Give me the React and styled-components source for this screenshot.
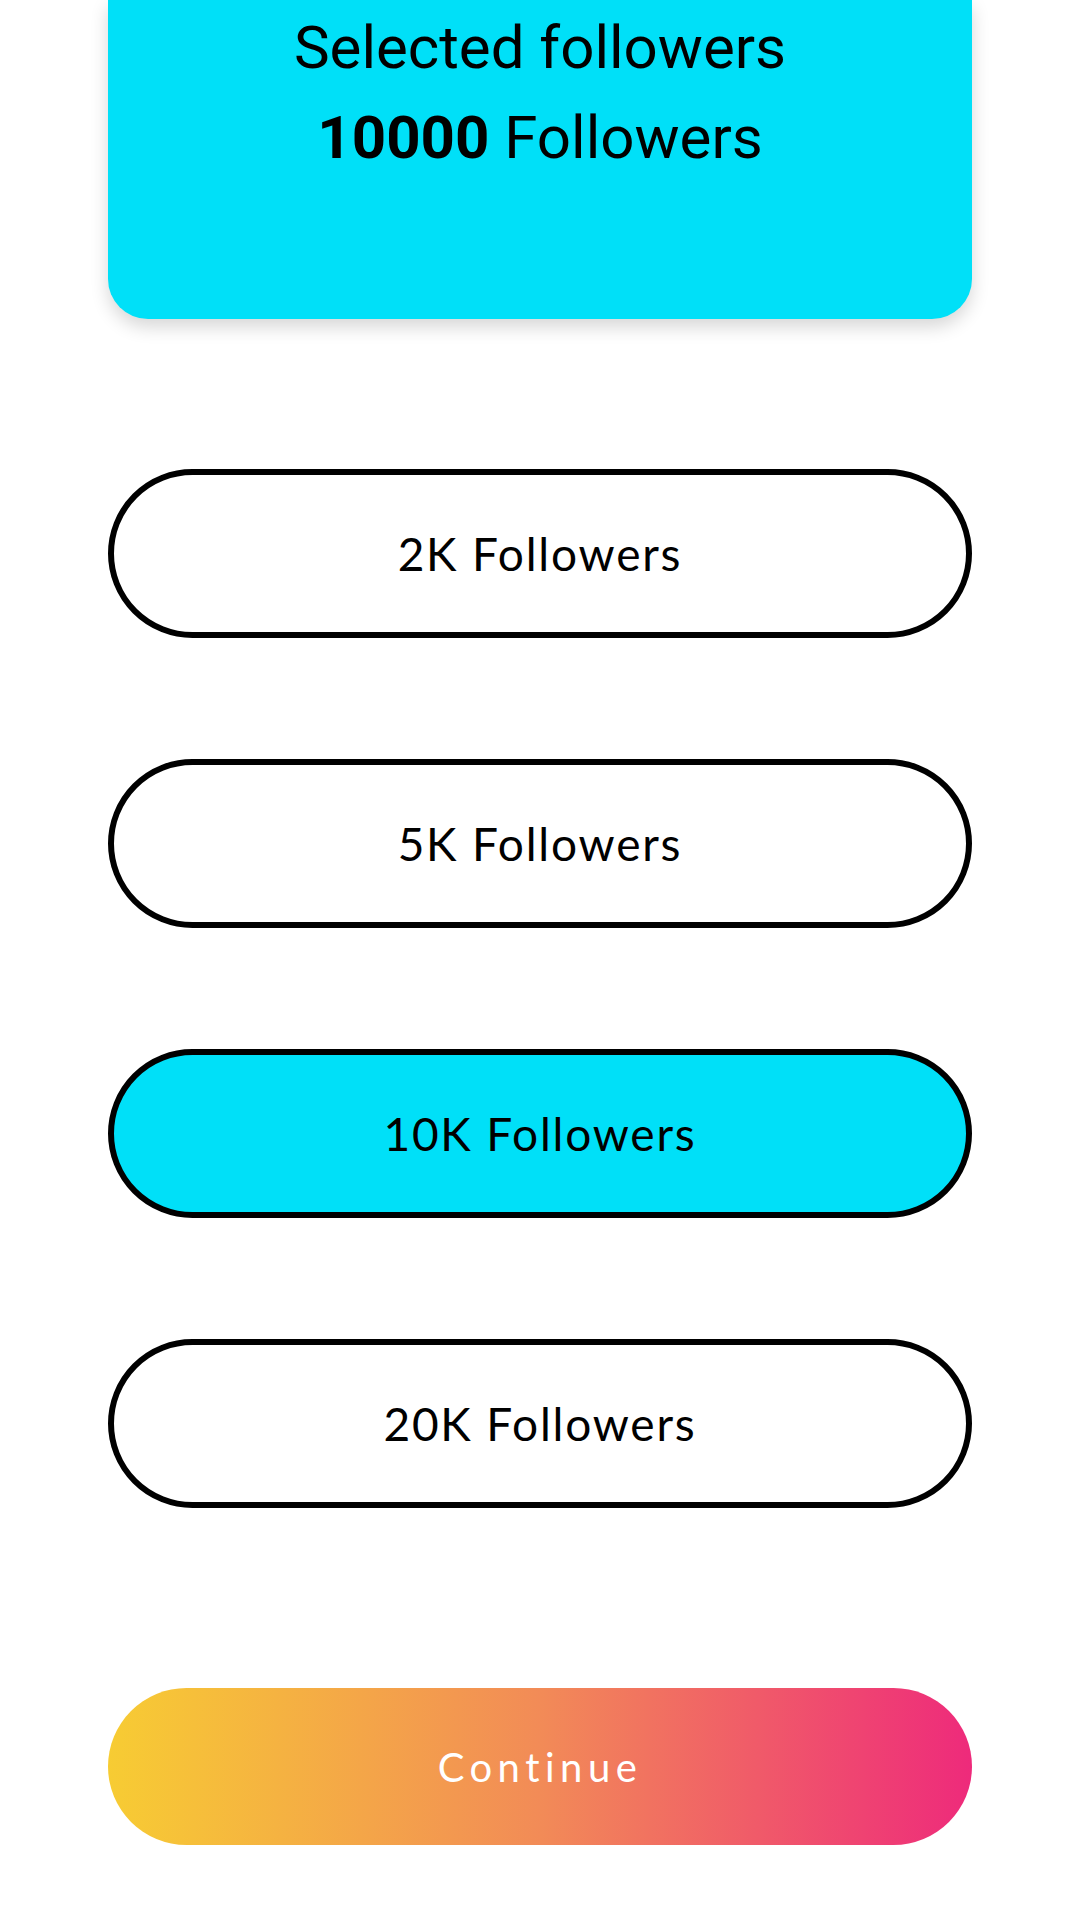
import React, { useState } from 'react';
import styled, { createGlobalStyle } from 'styled-components';

const GlobalStyle = createGlobalStyle`
  html, body {
    margin: 0;
    padding: 0;
    background: #ffffff;
  }
  * {
    box-sizing: border-box;
  }
`;

const Page = styled.div`
  width: 1080px;
  min-height: 1920px;
  padding: 0 108px;
  display: flex;
  flex-direction: column;
  background: #ffffff;
`;

const SummaryCard = styled.div`
  height: 319px;
  padding-top: 3px;
  background: #00e0f8;
  border-radius: 0 0 40px 40px;
  box-shadow: 0 8px 18px rgba(0, 0, 0, 0.16);
  display: flex;
  flex-direction: column;
  align-items: center;
  font-family: Roboto, "Liberation Sans", sans-serif;
  font-size: 60px;
  line-height: 90px;
  color: #000000;
`;

const SummaryLine = styled.div`
  text-align: center;
`;

const Count = styled.span`
  font-weight: 700;
`;

const Options = styled.div`
  margin-top: 150px;
  display: flex;
  flex-direction: column;
  gap: 121px;
`;

const OptionButton = styled.button`
  height: 169px;
  width: 100%;
  border: 6px solid #000000;
  border-radius: 85px;
  background: ${(p) => (p.$active ? '#00e0f8' : '#ffffff')};
  color: #000000;
  font-family: Lato, "Open Sans", sans-serif;
  font-size: 46px;
  font-weight: 400;
  letter-spacing: 1.8px;
  cursor: pointer;
  padding: 0;
`;

const ContinueButton = styled.button`
  margin-top: 180px;
  height: 157px;
  width: 100%;
  border: none;
  border-radius: 79px;
  background: linear-gradient(90deg, #f7cc33 0%, #f28b57 50%, #ee2a7b 100%);
  color: #ffffff;
  font-family: Lato, "Open Sans", sans-serif;
  font-size: 40px;
  font-weight: 400;
  letter-spacing: 5.5px;
  cursor: pointer;
  padding: 0;
`;

const options = [
  { id: 2000, label: '2K Followers' },
  { id: 5000, label: '5K Followers' },
  { id: 10000, label: '10K Followers' },
  { id: 20000, label: '20K Followers' },
];

const App = () => {
  const [selected, setSelected] = useState(10000);

  return (
    <>
      <GlobalStyle />
      <Page>
        <SummaryCard>
          <SummaryLine>Selected followers</SummaryLine>
          <SummaryLine>
            <Count>{selected}</Count> Followers
          </SummaryLine>
        </SummaryCard>
        <Options>
          {options.map((opt) => (
            <OptionButton
              key={opt.id}
              $active={opt.id === selected}
              onClick={() => setSelected(opt.id)}
            >
              {opt.label}
            </OptionButton>
          ))}
        </Options>
        <ContinueButton>Continue</ContinueButton>
      </Page>
    </>
  );
};

export default App;
